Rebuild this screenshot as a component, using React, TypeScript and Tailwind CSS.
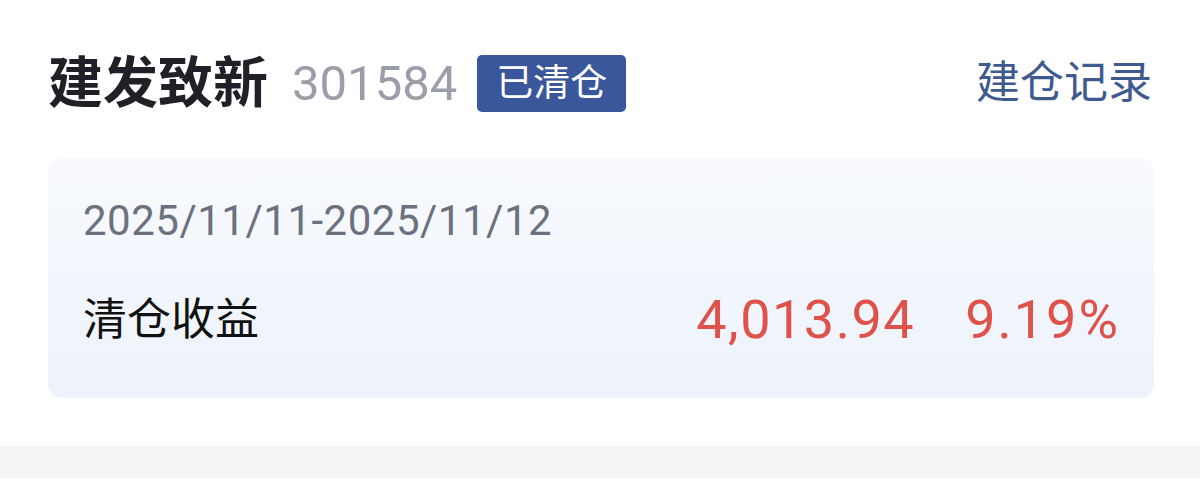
export default function App() {
  return (
    <div className="w-[1200px] h-[490px] bg-white font-['Roboto','Noto_Sans_CJK_SC',sans-serif] overflow-hidden">
      <div className="pl-12 pr-[46px]">
        <div className="mt-[50px] h-[66px] flex items-center">
          <span className="text-[55px] leading-none font-bold text-[#1f2126]">建发致新</span>
          <span className="ml-[24px] text-[49px] leading-none text-[#9a9ea8]">301584</span>
          <span className="ml-[20px] h-[57px] px-[19px] flex items-center rounded-[5px] bg-[#39579a] text-white text-[37px] leading-none">
            已清仓
          </span>
          <span className="ml-auto mr-[2px] text-[44px] leading-none text-[#3e5a8e]">建仓记录</span>
        </div>

        <div className="mt-[42px] h-[240px] rounded-[14px] bg-gradient-to-b from-[#f8fafd] to-[#edf2fb] pl-[35px] pr-[34px] pt-[38px] flex flex-col">
          <div className="h-[50px] flex items-center text-[42px] leading-none tracking-[0.5px] text-[#6b717e]">
            2025/11/11-2025/11/12
          </div>
          <div className="mt-[44px] h-[60px] flex items-center">
            <span className="text-[44px] leading-none text-[#111111]">清仓收益</span>
            <span className="ml-auto text-[54px] leading-none tracking-[1.5px] text-[#df524b]">4,013.94</span>
            <span className="ml-[50px] text-[54px] leading-none tracking-[2px] text-[#df524b]">9.19%</span>
          </div>
        </div>
      </div>
      <div className="mt-[48px] h-[32px] bg-[#f3f4f6]" />
    </div>
  );
}
